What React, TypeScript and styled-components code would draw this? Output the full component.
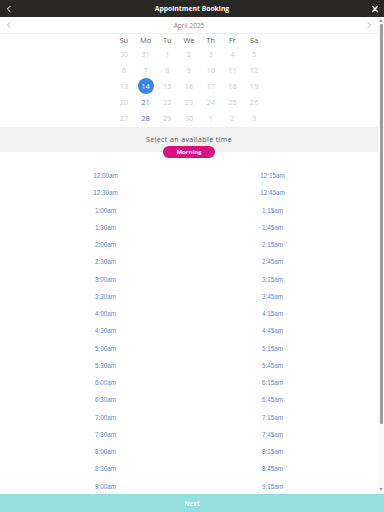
import React from 'react';
import styled, { createGlobalStyle } from 'styled-components';

const GlobalStyle = createGlobalStyle`
  html, body {
    margin: 0;
    padding: 0;
    height: 100%;
    overflow: hidden;
    background: #fff;
  }
  #root {
    height: 100%;
  }
`;

const Page = styled.div`
  display: flex;
  flex-direction: column;
  height: 512px;
  font-family: 'Open Sans', 'Liberation Sans', sans-serif;
`;

const Header = styled.header`
  height: 17px;
  flex-shrink: 0;
  background-color: #2a2727;
  color: #fff;
  display: flex;
  align-items: center;
  justify-content: space-between;
  padding: 0 4px;
`;

const HeaderTitle = styled.div`
  font-size: 6.8px;
  font-weight: 700;
`;

const HeaderIcon = styled.span`
  width: 9px;
  height: 9px;
  display: flex;
  align-items: center;
  justify-content: center;
`;

const Body = styled.div`
  flex: 1;
  min-height: 0;
  position: relative;
`;

const Scroller = styled.div`
  height: 100%;
  overflow-y: auto;
  padding-right: 6px;
  box-sizing: border-box;
  scrollbar-width: none;
  &::-webkit-scrollbar {
    display: none;
  }
`;

const ScrollRail = styled.div`
  position: absolute;
  top: 0;
  right: 0;
  bottom: 0;
  width: 6px;
  background: #fbfbfb;
  display: flex;
  flex-direction: column;
  align-items: center;
  padding: 2px 0 3px;
  box-sizing: border-box;
`;

const RailArrow = styled.span<{ $up?: boolean }>`
  width: 0;
  height: 0;
  border-left: 2px solid transparent;
  border-right: 2px solid transparent;
  ${(p) => (p.$up ? 'border-bottom: 3px solid #a0a0a0;' : 'border-top: 3px solid #a0a0a0;')}
`;

const RailThumb = styled.span`
  width: 3px;
  height: 400px;
  margin-top: 2px;
  background: #9c9c9c;
  border-radius: 1px;
`;

const RailSpacer = styled.span`
  flex: 1;
`;

const MonthBar = styled.div`
  height: 16px;
  display: flex;
  align-items: center;
  justify-content: space-between;
  padding: 0 5px;
  border-bottom: 1px solid #efefef;
`;

const MonthLabel = styled.div`
  font-size: 6.5px;
  color: #888;
`;

const NavChevron = styled.span`
  display: flex;
  align-items: center;
`;

const Calendar = styled.div`
  width: 152px;
  margin: 0 auto;
  display: grid;
  grid-template-columns: repeat(7, 1fr);
  grid-template-rows: 12px;
  grid-auto-rows: 16px;
`;

const WeekDay = styled.div`
  font-size: 7.5px;
  color: #6a6a6a;
  display: flex;
  align-items: center;
  justify-content: center;
`;

const Day = styled.div<{ $kind: 'muted' | 'active' | 'selected' }>`
  display: flex;
  align-items: center;
  justify-content: center;
  font-size: 7.5px;
  color: ${(p) => (p.$kind === 'active' ? '#3f7ed8' : p.$kind === 'selected' ? '#fff' : '#cfcfcf')};
`;

const SelectedDot = styled.span`
  width: 16px;
  height: 16px;
  border-radius: 50%;
  background: #3a86e0;
  color: #fff;
  display: flex;
  align-items: center;
  justify-content: center;
`;

const TimeBand = styled.div`
  margin-top: 1px;
  background: #f1f1f1;
  height: 25px;
  display: flex;
  flex-direction: column;
  align-items: center;
  justify-content: flex-end;
  position: relative;
`;

const BandText = styled.div`
  font-size: 7px;
  color: #555;
  letter-spacing: 0.4px;
  margin-bottom: 8px;
`;

const Pill = styled.div`
  position: absolute;
  left: 50%;
  bottom: -6px;
  transform: translateX(-50%);
  width: 52px;
  height: 12px;
  border-radius: 6px;
  background: #d9107f;
  color: #fff;
  font-size: 6px;
  font-weight: 700;
  display: flex;
  align-items: center;
  justify-content: center;
`;

const Times = styled.div`
  display: grid;
  grid-template-columns: 1fr 1fr;
  grid-auto-rows: 17.25px;
  padding: 15px 22px 20px;
`;

const TimeSlot = styled.div`
  font-family: 'Liberation Sans', Arial, sans-serif;
  font-size: 6.3px;
  color: #5c8ad8;
  display: flex;
  align-items: center;
  justify-content: center;
`;

const NextButton = styled.button`
  height: 18px;
  flex-shrink: 0;
  border: none;
  background: #95dfdf;
  color: #fff;
  font-family: 'Open Sans', 'Liberation Sans', sans-serif;
  font-size: 6.5px;
  font-weight: 700;
  padding: 0;
`;

const weekDays = ['Su', 'Mo', 'Tu', 'We', 'Th', 'Fr', 'Sa'];

const days: number[] = [30, 31, ...Array.from({ length: 30 }, (_, i) => i + 1), 1, 2, 3];

const formatTime = (mins: number) => {
  const h = Math.floor(mins / 60);
  const m = mins % 60;
  const hh = h % 12 === 0 ? 12 : h % 12;
  return `${hh}:${m.toString().padStart(2, '0')}${h < 12 ? 'am' : 'pm'}`;
};

const slots: string[] = [];
for (let t = 0; t < 12 * 60; t += 15) slots.push(formatTime(t));

const Chevron = ({ dir, color, size }: { dir: 'left' | 'right'; color: string; size: number }) => (
  <svg width={size} height={size} viewBox="0 0 10 10" fill="none">
    <path
      d={dir === 'left' ? 'M6.5 1.5 L3 5 L6.5 8.5' : 'M3.5 1.5 L7 5 L3.5 8.5'}
      stroke={color}
      strokeWidth="1.2"
      strokeLinecap="round"
      strokeLinejoin="round"
    />
  </svg>
);

export default function App() {
  return (
    <Page>
      <GlobalStyle />
      <Header>
        <HeaderIcon>
          <Chevron dir="left" color="#fff" size={8} />
        </HeaderIcon>
        <HeaderTitle>Appointment Booking</HeaderTitle>
        <HeaderIcon>
          <svg width="8" height="8" viewBox="0 0 10 10">
            <path d="M2 2 L8 8 M8 2 L2 8" stroke="#fff" strokeWidth="1.8" strokeLinecap="round" />
          </svg>
        </HeaderIcon>
      </Header>
      <Body>
        <Scroller>
          <MonthBar>
            <NavChevron>
              <Chevron dir="left" color="#bbb" size={8} />
            </NavChevron>
            <MonthLabel>April 2025</MonthLabel>
            <NavChevron>
              <Chevron dir="right" color="#bbb" size={8} />
            </NavChevron>
          </MonthBar>
          <Calendar>
            {weekDays.map((d) => (
              <WeekDay key={d}>{d}</WeekDay>
            ))}
            {days.map((d, i) => {
              const inMonth = i >= 2 && i < 32;
              if (inMonth && d === 14)
                return (
                  <Day key={i} $kind="selected">
                    <SelectedDot>14</SelectedDot>
                  </Day>
                );
              const active = inMonth && (d === 21 || d === 28);
              return (
                <Day key={i} $kind={active ? 'active' : 'muted'}>
                  {d}
                </Day>
              );
            })}
          </Calendar>
          <TimeBand>
            <BandText>Select an available time</BandText>
            <Pill>Morning</Pill>
          </TimeBand>
          <Times>
            {slots.map((s) => (
              <TimeSlot key={s}>{s}</TimeSlot>
            ))}
          </Times>
        </Scroller>
        <ScrollRail>
          <RailArrow $up />
          <RailThumb />
          <RailSpacer />
          <RailArrow />
        </ScrollRail>
      </Body>
      <NextButton>Next</NextButton>
    </Page>
  );
}
